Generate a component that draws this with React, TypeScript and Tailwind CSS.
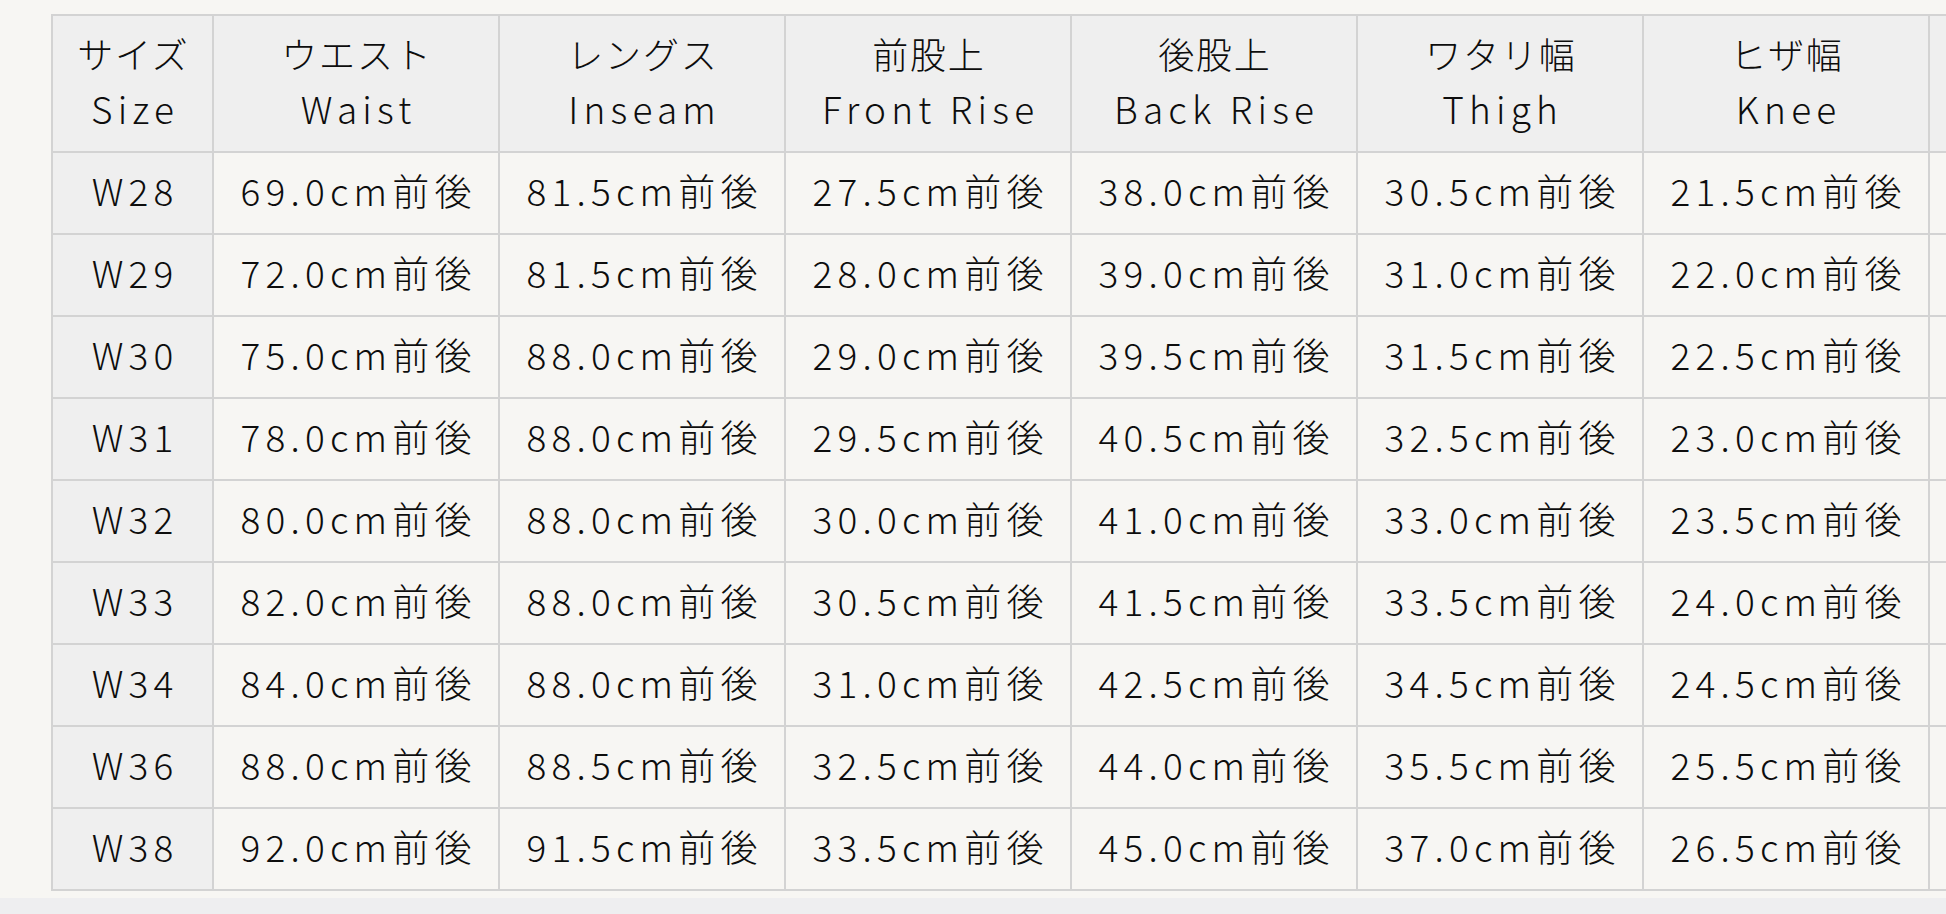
import React from "react";

const headers: [string, string][] = [
  ["サイズ", "Size"],
  ["ウエスト", "Waist"],
  ["レングス", "Inseam"],
  ["前股上", "Front Rise"],
  ["後股上", "Back Rise"],
  ["ワタリ幅", "Thigh"],
  ["ヒザ幅", "Knee"],
  ["裾幅", "Hem"],
];

const rows: string[][] = [
  ["W28", "69.0", "81.5", "27.5", "38.0", "30.5", "21.5", "17.5"],
  ["W29", "72.0", "81.5", "28.0", "39.0", "31.0", "22.0", "18.0"],
  ["W30", "75.0", "88.0", "29.0", "39.5", "31.5", "22.5", "18.5"],
  ["W31", "78.0", "88.0", "29.5", "40.5", "32.5", "23.0", "19.0"],
  ["W32", "80.0", "88.0", "30.0", "41.0", "33.0", "23.5", "19.5"],
  ["W33", "82.0", "88.0", "30.5", "41.5", "33.5", "24.0", "20.0"],
  ["W34", "84.0", "88.0", "31.0", "42.5", "34.5", "24.5", "20.5"],
  ["W36", "88.0", "88.5", "32.5", "44.0", "35.5", "25.5", "21.0"],
  ["W38", "92.0", "91.5", "33.5", "45.0", "37.0", "26.5", "21.5"],
];

export default function App() {
  return (
    <div
      className="w-[1946px] h-[914px] overflow-hidden bg-[#f7f6f3] text-[#0d0d0d] font-light flex flex-col"
      style={{ fontFamily: '"Noto Sans CJK JP", "Noto Sans", sans-serif' }}
    >
      <div className="pl-[51px] pt-[14px] overflow-hidden">
        <div className="grid w-max grid-cols-[159px_repeat(7,284px)] gap-[2px] p-[2px] bg-[#d3d3d3]">
          {headers.map(([ja, en], i) => (
            <div
              key={i}
              className="h-[135px] pb-[5px] bg-[#efefef] flex flex-col items-center justify-center leading-[55px] whitespace-nowrap"
            >
              <span className="text-[36px] tracking-[0.05em] pl-[0.05em]">{ja}</span>
              <span className="text-[37px] tracking-[0.14em] pl-[0.14em]">{en}</span>
            </div>
          ))}
          {rows.map((r, ri) =>
            r.map((v, ci) => (
              <div
                key={`${ri}-${ci}`}
                className={`h-[80px] pb-[4px] flex items-center justify-center text-[37px] tracking-[0.14em] whitespace-nowrap ${
                  ci === 0 ? "bg-[#efefef]" : "bg-[#f7f6f3]"
                }`}
              >
                <span className="pl-[0.14em]">{ci === 0 ? v : `${v}cm前後`}</span>
              </div>
            ))
          )}
        </div>
      </div>
      <div className="mt-[7px] h-[16px] bg-[#eeeef0]" />
    </div>
  );
}
